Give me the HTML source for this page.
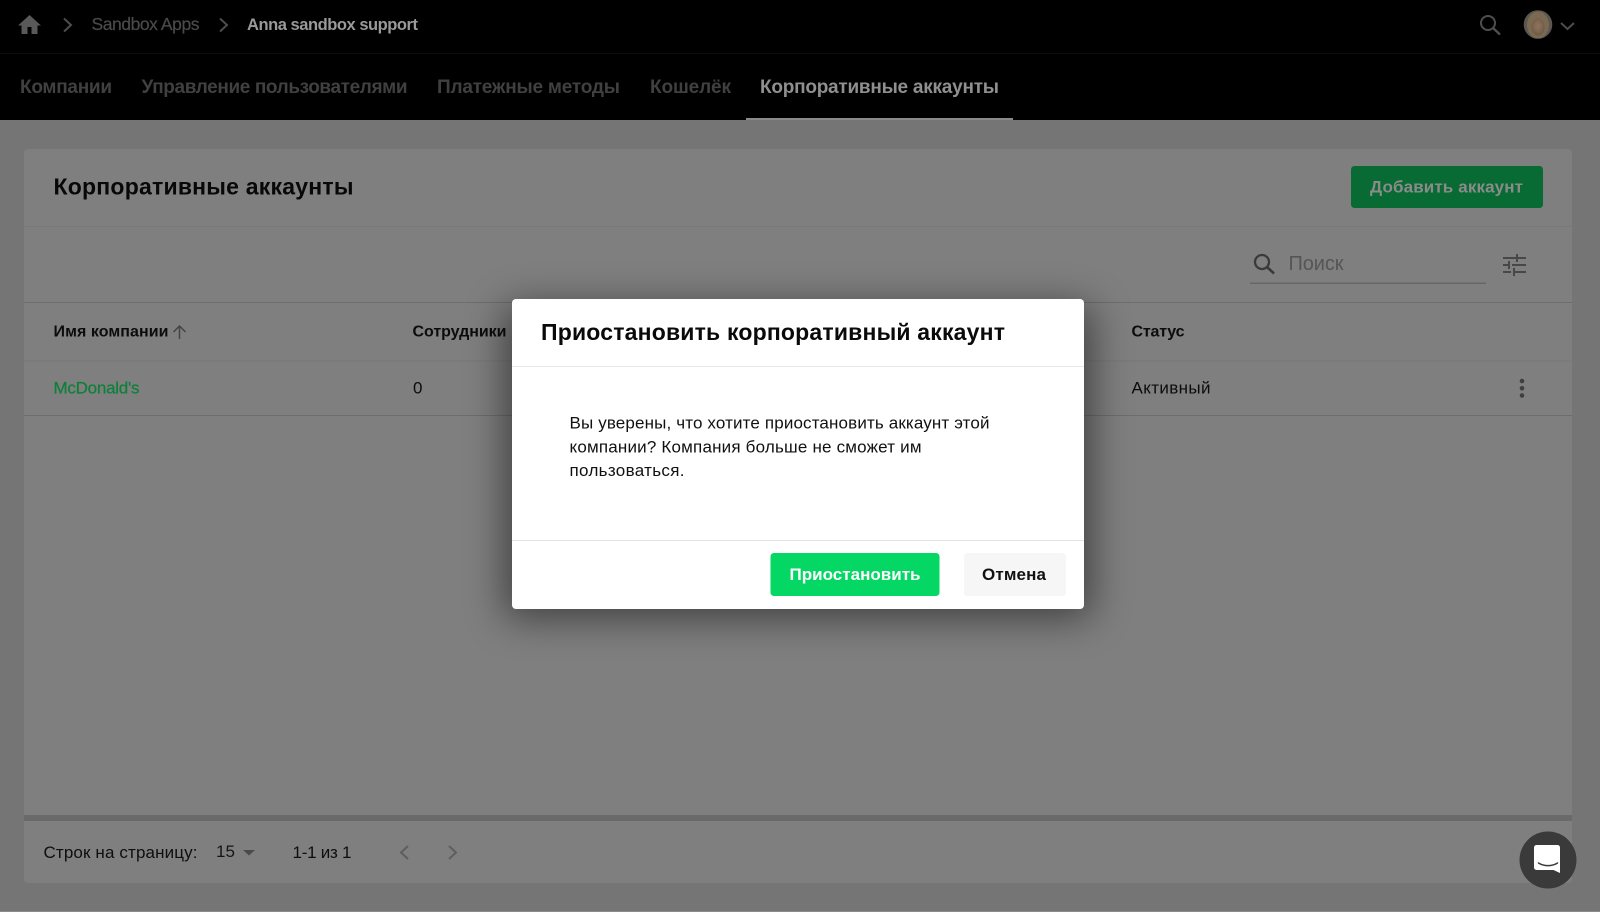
<!DOCTYPE html>
<html lang="ru">
<head>
<meta charset="utf-8">
<title>Корпоративные аккаунты</title>
<style>
html,body{margin:0;padding:0;width:1600px;height:912px;overflow:hidden;background:#757575}
svg{display:block}
text{font-family:"Liberation Sans",Arial,sans-serif;font-size:17px;white-space:pre}
.m{font-weight:700}
.r{stroke:currentColor;stroke-width:.2px}
</style>
</head>
<body>
<svg xmlns="http://www.w3.org/2000/svg" width="1600" height="912" viewBox="0 0 1600 912">
<defs>
<filter id="sh" x="-20%" y="-30%" width="140%" height="160%"><feGaussianBlur stdDeviation="20"/></filter>
<radialGradient id="av" cx="50%" cy="45%" r="55%"><stop offset="0" stop-color="#8f7560"/><stop offset=".6" stop-color="#7f6650"/><stop offset="1" stop-color="#6b5844"/></radialGradient>
</defs>

<rect width="1600" height="912" fill="#757575"/>
<rect y="911" width="1600" height="1" fill="#8a8a8a"/>

<!-- Top bar -->
<rect width="1600" height="120" fill="#000"/>
<rect y="53" width="1600" height="1" fill="#0e0e0e"/>
<path d="M29.500 15L18 25.500h3.500V34h6v-7h4v7h6v-8.500H41z" fill="#595959"/>
<path d="M64 18.500l7 6.500-7 6.500" fill="none" stroke="#4d4d4d" stroke-width="2"/>
<text x="91.500" y="30" fill="#4a4a4a" color="#4a4a4a" class="r" textLength="108" lengthAdjust="spacing" style="font-size:17.500px">Sandbox Apps</text>
<path d="M220 18.500l7 6.500-7 6.500" fill="none" stroke="#4d4d4d" stroke-width="2"/>
<text x="247" y="30" class="m" fill="#9a9a9a" textLength="171" lengthAdjust="spacing" style="font-size:16.500px">Anna sandbox support</text>
<circle cx="1488" cy="23" r="7" fill="none" stroke="#4f4f4f" stroke-width="2"/>
<path d="M1493 28l7 6.500" stroke="#4f4f4f" stroke-width="2.300" fill="none"/>
<circle cx="1538" cy="24.500" r="14.300" fill="#5c5650"/>
<ellipse cx="1538" cy="25" rx="11" ry="13.500" fill="#7a6a52"/>
<ellipse cx="1538" cy="27" rx="6.500" ry="8.500" fill="url(#av)"/>
<path d="M1561 23l6.500 6 6.500-6" fill="none" stroke="#4d4d4d" stroke-width="2"/>

<!-- Tabs -->
<g fill="#404040" style="font-weight:700">
<text x="20" y="93" textLength="92" lengthAdjust="spacing" style="font-size:19px">Компании</text>
<text x="141.500" y="93" textLength="266" lengthAdjust="spacing" style="font-size:19px">Управление пользователями</text>
<text x="437" y="93" textLength="183" lengthAdjust="spacing" style="font-size:19px">Платежные методы</text>
<text x="650" y="93" textLength="81" lengthAdjust="spacing" style="font-size:19px">Кошелёк</text>
<text x="760" y="93" fill="#8f8f8f" textLength="239" lengthAdjust="spacing" style="font-size:19px">Корпоративные аккаунты</text>
</g>
<rect x="746" y="118" width="267" height="2" fill="#8a8a8a"/>

<!-- Card -->
<rect x="24" y="149" width="1548" height="734" rx="4" fill="#7f7f7f"/>
<text x="53.500" y="194.500" class="m" fill="#080808" textLength="300" lengthAdjust="spacing" style="font-size:23px">Корпоративные аккаунты</text>
<rect x="1351" y="166" width="192" height="42" rx="3.500" fill="#086b33"/>
<text x="1370" y="192.500" class="m" fill="#8b8b8b" textLength="153" lengthAdjust="spacing" style="font-size:17px">Добавить аккаунт</text>
<rect x="24" y="226" width="1548" height="1" fill="#787878"/>

<!-- Search -->
<circle cx="1262" cy="262" r="7" fill="none" stroke="#3a3a3a" stroke-width="2.300"/>
<path d="M1267 267l7 6.500" stroke="#3a3a3a" stroke-width="2.600" fill="none"/>
<text x="1288.500" y="270" fill="#555" textLength="55" lengthAdjust="spacing" style="font-size:20px">Поиск</text>
<rect x="1250" y="282.500" width="236" height="1.500" fill="#666"/>
<g fill="#474747">
<rect x="1503" y="257" width="13" height="2"/><rect x="1518" y="257" width="8" height="2"/><rect x="1516" y="254" width="2" height="8"/>
<rect x="1503" y="264" width="5" height="2"/><rect x="1512" y="264" width="14" height="2"/><rect x="1508" y="261" width="2" height="8"/>
<rect x="1503" y="271" width="8" height="2"/><rect x="1515" y="271" width="11" height="2"/><rect x="1513" y="268" width="2" height="8"/>
</g>
<rect x="24" y="302" width="1548" height="1" fill="#6d6d6d"/>

<!-- Table -->
<text x="53.500" y="336.500" class="m" fill="#0c0c0c" textLength="115" lengthAdjust="spacing" style="font-size:16px">Имя компании</text>
<path d="M179.500 339v-13M173.500 332l6-6 6 6" fill="none" stroke="#454545" stroke-width="1.500"/>
<text x="412.500" y="336.500" class="m" fill="#0c0c0c" textLength="94" lengthAdjust="spacing" style="font-size:16px">Сотрудники</text>
<text x="1131.500" y="336.500" class="m" fill="#0c0c0c" textLength="53" lengthAdjust="spacing" style="font-size:16px">Статус</text>
<rect x="24" y="360.500" width="1548" height="1" fill="#777"/>
<text x="53.500" y="393.500" fill="#0a8038" color="#0a8038" class="r" textLength="86" lengthAdjust="spacing">McDonald's</text>
<text x="413" y="393.500" fill="#0c0c0c">0</text>
<text x="1131.500" y="393.500" fill="#0c0c0c" textLength="79" lengthAdjust="spacing">Активный</text>
<circle cx="1522" cy="381" r="2.300" fill="#3f3f3f"/><circle cx="1522" cy="388.300" r="2.300" fill="#3f3f3f"/><circle cx="1522" cy="395.500" r="2.300" fill="#3f3f3f"/>
<rect x="24" y="415" width="1548" height="1" fill="#6d6d6d"/>

<!-- Footer -->
<rect x="24" y="815" width="1548" height="6" fill="#6a6a6a"/>
<text x="43.500" y="858" fill="#0e0e0e" textLength="154" lengthAdjust="spacing">Строк на страницу:</text>
<text x="216" y="857" fill="#151515" textLength="19" lengthAdjust="spacing">15</text>
<path d="M243 850h12l-6 5.500z" fill="#4a4a4a"/>
<text x="292.500" y="858" fill="#0e0e0e" textLength="59" lengthAdjust="spacing">1-1 из 1</text>
<path d="M408 846l-7 6.500 7 6.500" fill="none" stroke="#5e5e5e" stroke-width="2"/>
<path d="M449 846l7 6.500-7 6.500" fill="none" stroke="#5e5e5e" stroke-width="2"/>

<!-- Modal -->
<rect x="505" y="306" width="586" height="312" rx="6" fill="#000" opacity=".5" filter="url(#sh)"/>
<rect x="512" y="299" width="572" height="310" rx="4" fill="#fff"/>
<text x="541" y="340" class="m" fill="#0a0a0a" textLength="464" lengthAdjust="spacing" style="font-size:23px">Приостановить корпоративный аккаунт</text>
<rect x="512" y="366" width="572" height="1" fill="#e8e8e8"/>
<g fill="#111">
<text x="569.500" y="428.500" textLength="420" lengthAdjust="spacing">Вы уверены, что хотите приостановить аккаунт этой</text>
<text x="569.500" y="452.500" textLength="352" lengthAdjust="spacing">компании? Компания больше не сможет им</text>
<text x="569.500" y="476" textLength="115" lengthAdjust="spacing">пользоваться.</text>
</g>
<rect x="512" y="540" width="572" height="1" fill="#e4e4e4"/>
<rect x="770.500" y="553" width="169" height="43" rx="3.500" fill="#04d764"/>
<text x="789.500" y="580" class="m" fill="#fff" textLength="131" lengthAdjust="spacing">Приостановить</text>
<rect x="964" y="553" width="102" height="43" rx="3.500" fill="#f6f6f6"/>
<text x="982" y="580" class="m" fill="#111" textLength="64" lengthAdjust="spacing">Отмена</text>

<!-- Chat launcher -->
<circle cx="1548" cy="860" r="28.500" fill="#3a3a3a"/>
<path d="M1536.500 845h21a2.500 2.500 0 0 1 2.500 2.500V873l-6.500-3h-17a2.500 2.500 0 0 1-2.500-2.500v-20a2.500 2.500 0 0 1 2.500-2.500z" fill="#fff"/>
<path d="M1538.500 863c5.500 3.500 13.500 3.500 19 0" fill="none" stroke="#3a3a3a" stroke-width="1.500" stroke-linecap="round"/>
</svg>
</body>
</html>
